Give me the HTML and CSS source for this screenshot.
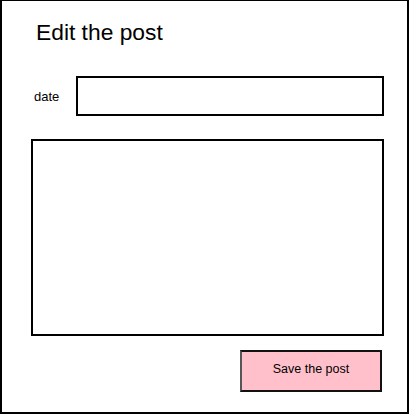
FILE: index.html
```html
<!doctype html>
<html>
<head>
    <meta charset="utf-8">
    <title>Edit the post</title>
    <link rel="stylesheet" href="styles.css">
</head>
<body>
<div class="card">
    <h1 class="title">Edit the post</h1>
    <div class="row">
        <label class="label" for="date">date</label>
        <input class="field" id="date" type="text">
    </div>
    <textarea class="body-text"></textarea>
    <button class="save" type="button">Save the post</button>
</div>
</body>
</html>
```

FILE: styles.css
```css
body{margin:0; padding:0; background:#fff; font-family:"Liberation Sans", Arial, sans-serif;}
.card{width:409px; height:414px; box-sizing:border-box; border:2px solid #000; border-top-width:1px; padding:0 23px 0 29px; display:flex; flex-direction:column;}
.title{margin:18px 0 0 5px; font-size:22.8px; line-height:26px; font-weight:normal; color:#000;}
.row{display:flex; align-items:center; margin-top:31px;}
.label{width:45px; padding-left:3px; box-sizing:border-box; flex:none; font-size:13px; color:#000;}
.field{width:308px; height:40px; box-sizing:border-box; border:2px solid #000; margin:0; padding:0; background:#fff; outline:none;}
.body-text{width:353px; height:197px; box-sizing:border-box; border:2px solid #000; margin:23px 0 0 0; padding:0; resize:none; background:#fff; outline:none;}
.save{align-self:flex-end; width:142px; height:42px; margin:14px 2px 0 0; box-sizing:border-box; border:2px solid #111; border-left-color:#555; background:#ffc0cb; font-family:"Liberation Sans", Arial, sans-serif; font-size:12.5px; color:#000; padding:0 0 4px 0;}
```
